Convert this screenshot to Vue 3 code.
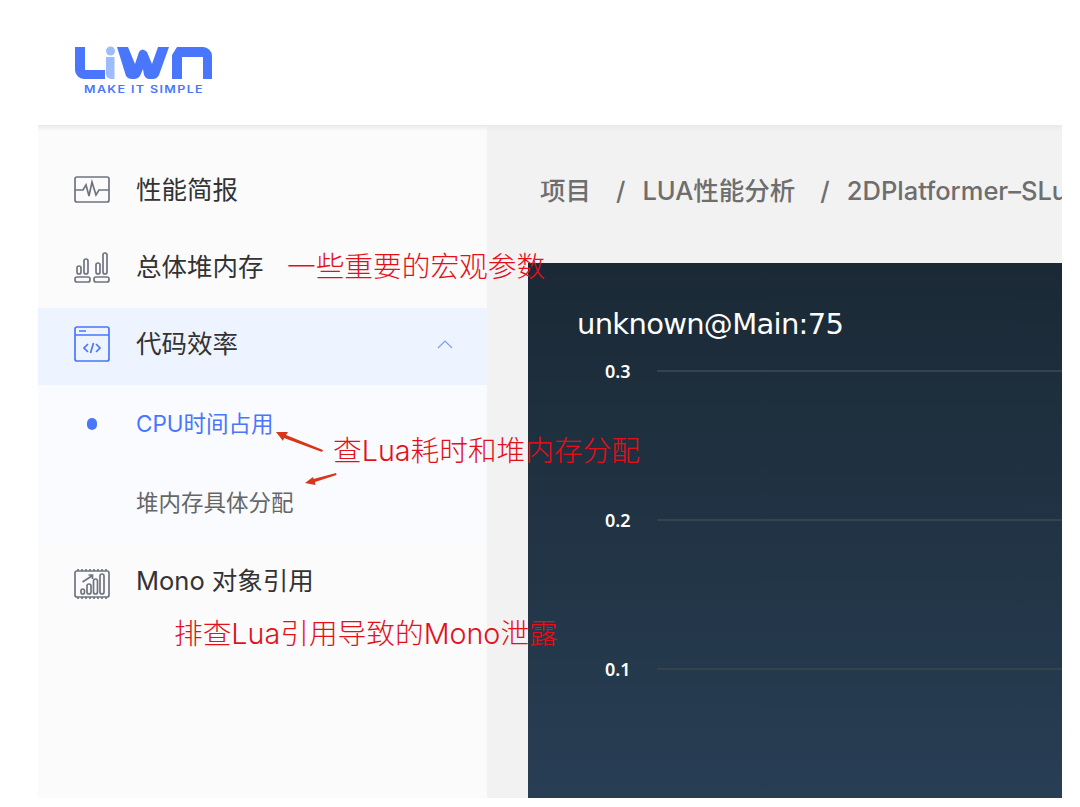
<template>
  <div class="page">
    <header class="top">
      <div class="logo">
        <svg width="138" height="33" viewBox="0 0 138 33">
          <path d="M0 1h10v23h20v9H9a9 9 0 0 1-9-9z" fill="#4a76fb" />
          <circle cx="35.500" cy="5" r="4.500" fill="#9dbcfd" />
          <path d="M31 11h8.500v22H36a5 5 0 0 1-5-5z" fill="#9dbcfd" />
          <path d="M42 1H53l7 17 4-12q3-5 8 0l5 12 6-17h11L84 29q-2 4-6 4h-4q-3 0-5-4l-1-6-3 7q-2 3-5 3h-4q-3 0-5-3z" fill="#4a76fb" />
          <path d="M97 9l5-8h26a9 9 0 0 1 9 9v23h-9V11h-21v22H97z" fill="#4a76fb" />
        </svg>
        <span class="slogan">MAKE IT SIMPLE</span>
      </div>
    </header>

    <div class="shell">
      <aside class="side">
        <div v-for="item in menu" :key="item.label">
          <div class="row" :class="{ open: item.open }">
            <svg class="ico" viewBox="0 0 36 36" fill="none" :stroke="item.open ? '#4a76fb' : '#6f7480'" stroke-width="1.700" v-html="item.icon"></svg>
            <span class="label">{{ item.label }}</span>
            <svg v-if="item.open" class="chev" width="16" height="9" viewBox="0 0 16 9" fill="none" stroke="#7d9dfb" stroke-width="1.200">
              <path d="M1 8l7-7 7 7" />
            </svg>
          </div>
          <div v-if="item.open" class="subs">
            <div class="sub active"><i class="dot"></i>CPU时间占用</div>
            <div class="sub">堆内存具体分配</div>
          </div>
        </div>
      </aside>

      <main class="main">
        <div class="crumbs">
          <span v-for="(c, i) in crumbs" :key="c" class="crumb"><em v-if="i">/</em>{{ c }}</span>
        </div>
        <section class="chart">
          <h2>unknown@Main:75</h2>
          <div class="plot">
            <div v-for="t in ticks" :key="t" class="tick">
              <span>{{ t }}</span><b></b>
            </div>
          </div>
        </section>
      </main>
    </div>

    <span class="note n1">一些重要的宏观参数</span>
    <span class="note n2">查Lua耗时和堆内存分配</span>
    <span class="note n3">排查Lua引用导致的Mono泄露</span>
    <svg class="arrows" width="70" height="70" viewBox="0 0 70 70" fill="#d8361a">
      <path d="M1 2l12 0-2 3 37 15-1 2L9 8l-1 3z" />
      <path d="M30 53l8-6 .5 2L61 43l.5 2L40 52l.5 3z" />
    </svg>
  </div>
</template>

<script setup>
const menu = [
  { label: '性能简报', icon: '<rect x="1" y="5" width="34" height="25" rx="2"/><path d="M1 18h8l3-5 3 11 3-14 4 13 3-5h10"/>' },
  { label: '总体堆内存', icon: '<rect x="1" y="28" width="15" height="5" rx="2"/><rect x="20" y="28" width="15" height="5" rx="2"/><rect x="3" y="17" width="4" height="8" rx="2"/><rect x="10" y="10" width="4" height="15" rx="2"/><rect x="22" y="14" width="4" height="11" rx="2"/><rect x="29" y="4" width="4" height="21" rx="2"/>' },
  { label: '代码效率', open: true, icon: '<rect x="1" y="1" width="34" height="34" rx="2"/><path d="M1 9h34M5 5h7M14 18l-4 4 4 4M22 18l4 4-4 4M19.500 17l-3 10"/>' },
  { label: 'Mono 对象引用', icon: '<rect x="1" y="8" width="34" height="26" rx="2"/><path d="M4 8V6M8 8V6M12 8V6M16 8V6M20 8V6M24 8V6M28 8V6M32 8V6M4 36v-2M8 36v-2M12 36v-2M16 36v-2M20 36v-2M24 36v-2M28 36v-2M32 36v-2"/><rect x="7" y="26" width="3.500" height="5" rx="1.700"/><rect x="13" y="21" width="4" height="10" rx="2"/><rect x="19.500" y="16" width="4" height="15" rx="2"/><rect x="26" y="11" width="4" height="20" rx="2"/><path d="M8.500 19l10-6.500M14.500 12h4v4"/>' },
]

const crumbs = ['项目', 'LUA性能分析', '2DPlatformer–SLua']
const ticks = ['0.3', '0.2', '0.1']
</script>

<style>
body {
  background: #fff;
}
</style>

<style scoped>
.page {
  position: relative;
  width: 1080px;
  height: 807px;
  box-sizing: border-box;
  padding: 0 18px 9px 38px;
  display: flex;
  flex-direction: column;
  overflow: hidden;
  background: #fff;
  font-family: Inter, "Noto Sans CJK SC", sans-serif;
}
.top {
  height: 125px;
  flex: none;
  box-sizing: border-box;
  padding: 46px 0 0 37px;
}
.logo {
  width: 138px;
  display: flex;
  flex-direction: column;
  align-items: center;
}
.logo svg {
  display: block;
}
.slogan {
  margin-top: 5px;
  font-size: 10px;
  font-weight: 600;
  line-height: 11px;
  letter-spacing: 1.100px;
  color: #4a76fb;
  white-space: nowrap;
  transform: scaleX(1.25);
}
.shell {
  flex: 1;
  min-height: 0;
  display: flex;
  position: relative;
}
.shell::before {
  content: "";
  position: absolute;
  left: 0;
  right: 0;
  top: 0;
  height: 6px;
  background: linear-gradient(#e9e9e9, rgba(240, 240, 240, 0));
}
.side {
  width: 449px;
  flex: none;
  padding-top: 29px;
  box-sizing: border-box;
  background: #fbfbfb;
  color: #333;
  font-size: 25.500px;
}
.row {
  height: 77px;
  box-sizing: border-box;
  padding: 0 0 5px 36px;
  display: flex;
  align-items: center;
  gap: 26px;
}
.label {
  padding-bottom: 5px;
}
.row.open {
  background: #eef4ff;
}
.ico {
  width: 36px;
  height: 36px;
  flex: none;
}
.chev {
  margin-left: auto;
  margin-right: 34px;
}
.subs {
  padding-bottom: 2px;
  background: #f9fbff;
}
.sub {
  position: relative;
  height: 79px;
  box-sizing: border-box;
  padding: 0 0 6px 98px;
  display: flex;
  align-items: center;
  font-size: 22.500px;
  color: #666;
}
.sub.active {
  color: #4a76fb;
}
.dot {
  position: absolute;
  left: 49px;
  top: 33px;
  width: 10px;
  height: 12px;
  border-radius: 5px;
  background: #4a76fb;
}
.main {
  flex: 1;
  min-width: 0;
  display: flex;
  flex-direction: column;
  background: #f2f2f2;
  overflow: hidden;
}
.crumbs {
  height: 138px;
  flex: none;
  box-sizing: border-box;
  padding: 48px 0 0 53px;
  font-size: 25.500px;
  font-weight: 500;
  line-height: 36px;
  color: #6e6e6e;
  white-space: nowrap;
}
.crumb em {
  font-style: normal;
  margin: 0 17px 0 25px;
}
.chart {
  flex: 1;
  margin-left: 41px;
  padding: 43px 0 0 49px;
  color: #fff;
  background: linear-gradient(#1a2935, #283e54);
}
h2 {
  margin: 0;
  font: 400 29px/36px "DejaVu Sans", sans-serif;
  letter-spacing: -0.700px;
}
.plot {
  margin-top: 19px;
  margin-left: -49px;
  display: flex;
  flex-direction: column;
  gap: 129px;
}
.tick {
  height: 20px;
  display: flex;
  align-items: center;
  padding-left: 77px;
  font: 600 18px/20px "Noto Sans", sans-serif;
}
.tick span {
  width: 52px;
}
.tick b {
  flex: 1;
  height: 2px;
  background: #33444f;
}
.note {
  position: absolute;
  color: #e3101a;
  font-size: 28.700px;
  font-weight: 300;
  line-height: 36px;
  white-space: nowrap;
}
.n1 { left: 287px; top: 249px; }
.n2 { left: 333px; top: 433px; }
.n3 { left: 174px; top: 616px; }
.arrows {
  position: absolute;
  left: 275px;
  top: 430px;
}
</style>
